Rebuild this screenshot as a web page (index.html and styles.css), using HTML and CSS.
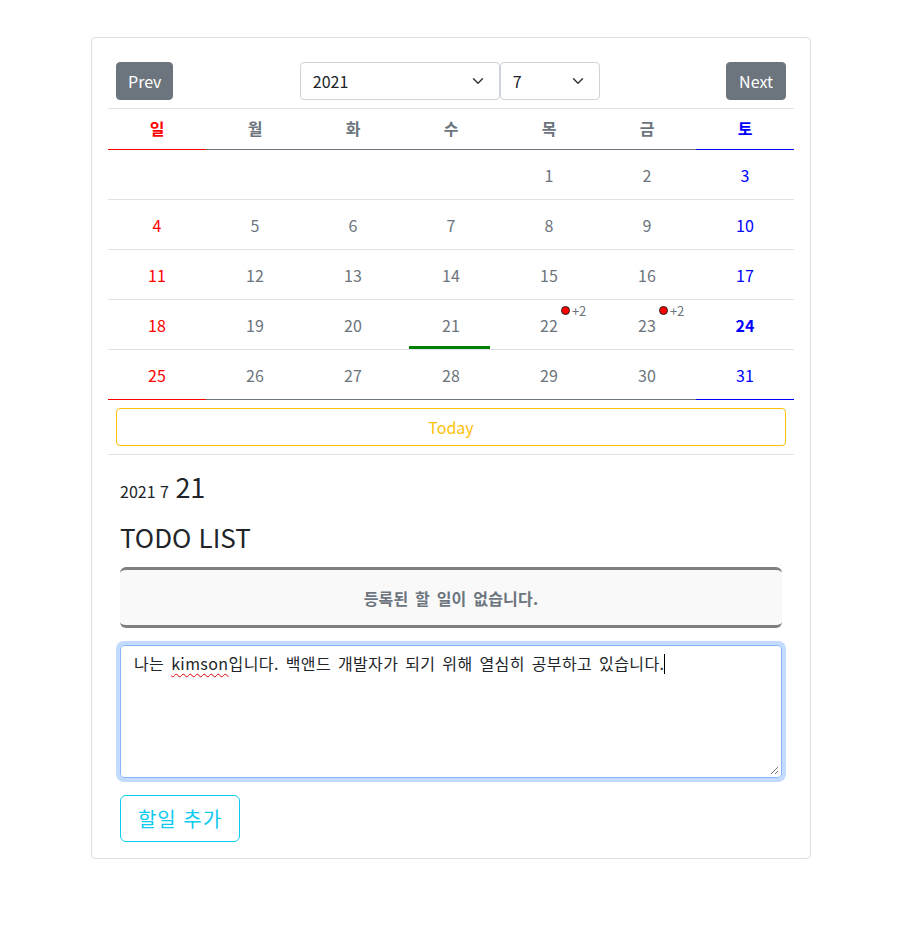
FILE: index.html
```html
<!DOCTYPE html>
<html lang="ko">
<head>
<meta charset="utf-8">
<title>Calendar</title>
<link rel="stylesheet" href="styles.css">
</head>
<body>
<div class="card">
  <div class="nav">
    <button class="btn btn-gray">Prev</button>
    <div class="selects">
      <div class="select year"><span>2021</span><svg viewBox="0 0 16 16" width="12" height="12"><path d="M2 5l6 6 6-6" fill="none" stroke="#343a40" stroke-width="2" stroke-linecap="round" stroke-linejoin="round"/></svg></div>
      <div class="select month"><span>7</span><svg viewBox="0 0 16 16" width="12" height="12"><path d="M2 5l6 6 6-6" fill="none" stroke="#343a40" stroke-width="2" stroke-linecap="round" stroke-linejoin="round"/></svg></div>
    </div>
    <button class="btn btn-gray btn-next">Next</button>
  </div>

  <table class="cal">
    <thead>
      <tr><th class="sun">일</th><th>월</th><th>화</th><th>수</th><th>목</th><th>금</th><th class="sat">토</th></tr>
    </thead>
    <tbody>
      <tr><td class="sun"></td><td></td><td></td><td></td><td>1</td><td>2</td><td class="sat">3</td></tr>
      <tr><td class="sun">4</td><td>5</td><td>6</td><td>7</td><td>8</td><td>9</td><td class="sat">10</td></tr>
      <tr><td class="sun">11</td><td>12</td><td>13</td><td>14</td><td>15</td><td>16</td><td class="sat">17</td></tr>
      <tr><td class="sun">18</td><td>19</td><td>20</td><td class="selected">21</td>
        <td><span class="num">22<span class="badge"><i class="dot"></i>+2</span></span></td>
        <td><span class="num">23<span class="badge"><i class="dot"></i>+2</span></span></td>
        <td class="sat today">24</td></tr>
      <tr class="last"><td class="sun">25</td><td>26</td><td>27</td><td>28</td><td>29</td><td>30</td><td class="sat">31</td></tr>
    </tbody>
  </table>

  <div class="today-wrap"><button class="btn btn-today">Today</button></div>
  <hr class="sep">

  <div class="todo">
    <div class="date"><span class="ym">2021 7</span> <span class="d">21</span></div>
    <h3 class="title">TODO LIST</h3>
    <div class="empty">등록된 할 일이 없습니다.</div>
    <div class="textarea"><span>나는 </span><span class="spell">kimson</span><span>입니다. 백앤드 개발자가 되기 위해 열심히 공부하고 있습니다.</span><i class="caret"></i>
      <svg class="grip" viewBox="0 0 10 10" width="10" height="10"><path d="M9 2L2 9M9 6L6 9" stroke="#777" stroke-width="1"/></svg>
    </div>
    <button class="btn btn-add">할일 추가</button>
  </div>
</div>
</body>
</html>
```

FILE: styles.css
```css
* { box-sizing: border-box; }
html, body { margin: 0; padding: 0; background: #fff; }
body {
  font-family: "Noto Sans CJK KR", "Noto Sans", sans-serif;
  color: #212529;
  font-size: 16px;
}
.card {
  width: 720px;
  margin: 37px 0 0 91px;
  border: 1px solid #dfdfdf;
  border-radius: 4px;
  padding: 24px 16px 16px;
}
.nav {
  display: flex;
  justify-content: space-between;
  align-items: center;
  padding: 0 8px;
  height: 38px;
}
.btn {
  font-family: inherit;
  cursor: pointer;
  background: transparent;
  border: 1px solid transparent;
  border-radius: 4px;
  font-size: 16px;
  line-height: 24px;
  padding: 6px 12px;
}
.btn-gray {
  background: #6c757d;
  border-color: #6c757d;
  color: #fff;
  height: 38px;
  padding: 6px 11px;
}
.btn-next { padding: 6px 12px; }
.selects { display: flex; }
.select {
  height: 38px;
  border: 1px solid #ced4da;
  border-radius: 4px;
  display: flex;
  align-items: center;
  justify-content: space-between;
  padding: 0 15px 0 12px;
  color: #212529;
  font-size: 16px;
}
.select svg { display: block; }
.year { width: 200px; }
.month { width: 100px; }

.cal {
  width: 686px;
  margin-top: 8px;
  border-collapse: collapse;
  table-layout: fixed;
}
.cal th, .cal td {
  width: 98px;
  text-align: center;
  color: #6c757d;
  padding: 0;
}
.cal thead tr { border-top: 1px solid #dee2e6; }
.cal th {
  height: 41px;
  font-size: 16px;
  font-weight: 700;
  padding-bottom: 2px;
  border-bottom: 1px solid currentColor;
}
.cal td {
  height: 50px;
  font-size: 16px;
  border-bottom: 1px solid #dee2e6;
  position: relative;
}
.cal .last td { border-bottom: 1px solid currentColor; }
.cal .sun { color: #ff0000; }
.cal .sat { color: #0000ff; }
.cal .today { font-weight: 700; }
.cal .selected::after {
  content: "";
  position: absolute;
  left: 7px;
  width: 81px;
  bottom: 0;
  height: 3px;
  background: #008000;
}
.num { position: relative; }
.badge {
  position: absolute;
  left: 100%;
  top: -9px;
  margin-left: 3px;
  display: flex;
  align-items: center;
  gap: 2px;
  font-size: 13px;
  line-height: 13px;
  color: #6c757d;
  white-space: nowrap;
}
.dot {
  display: block;
  width: 9px;
  height: 9px;
  border-radius: 50%;
  background: #ff0000;
  border: 1px solid #222;
}

.today-wrap { padding: 8px 8px 0; }
.btn-today {
  width: 100%;
  height: 38px;
  border-color: #ffc107;
  color: #ffc107;
}
.sep {
  margin: 8px 0 0;
  border: 0;
  border-top: 1px solid #dee2e6;
}

.todo { padding: 0 12px; }
.date {
  margin-top: 15px;
  height: 34px;
  line-height: 34px;
}
.ym { font-size: 16px; }
.d { font-size: 27px; margin-left: 2px; }
.title {
  margin: 16px 0 0;
  font-size: 26px;
  font-weight: 400;
  line-height: 34px;
}
.empty {
  margin-top: 13px;
  height: 61px;
  border-top: 3px solid #808080;
  border-bottom: 3px solid #808080;
  border-radius: 6px;
  background: #f9f9f9;
  color: #6c757d;
  font-weight: 700;
  font-size: 16px;
  word-spacing: 2px;
  letter-spacing: 0.2px;
  display: flex;
  align-items: center;
  justify-content: center;
}
.textarea {
  margin-top: 17px;
  height: 133px;
  border: 1px solid #86b7fe;
  border-radius: 4px;
  box-shadow: 0 0 0 4px rgba(13, 110, 253, 0.25);
  padding: 5px 13px;
  font-size: 16px;
  line-height: 24px;
  letter-spacing: 0.4px;
  word-spacing: 2px;
  color: #212529;
  position: relative;
}
.spell {
  text-decoration: underline wavy #e00000;
  text-decoration-thickness: 1px;
  text-underline-offset: 3px;
}
.caret {
  display: inline-block;
  width: 1px;
  height: 20px;
  background: #000;
  vertical-align: -4px;
}
.grip { position: absolute; right: 2px; bottom: 2px; }
.btn-add {
  margin-top: 17px;
  height: 47px;
  width: 120px;
  font-size: 20px;
  line-height: 30px;
  letter-spacing: 1px;
  padding: 7px 12px;
  border-color: #0dcaf0;
  color: #0dcaf0;
  border-radius: 6px;
}
```
